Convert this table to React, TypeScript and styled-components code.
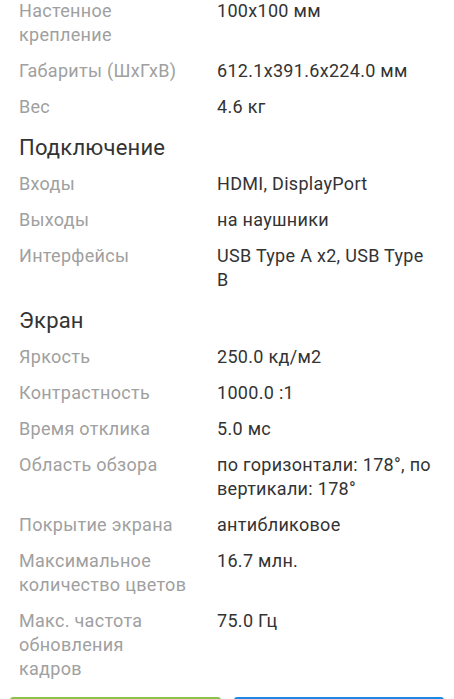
import React from "react";
import styled, { createGlobalStyle } from "styled-components";

const Global = createGlobalStyle`
  html, body { margin: 0; padding: 0; background: #ffffff; }
  body { font-family: Roboto, "Noto Sans", Arial, sans-serif; overflow: hidden; }
`;

const Page = styled.div`
  width: 454px;
  height: 699px;
  overflow: hidden;
  background: #fff;
`;

const List = styled.div`
  margin-top: -7px;
  padding: 0 19px;
  display: flex;
  flex-direction: column;
`;

const SectionTitle = styled.h2`
  margin: 0;
  padding: 8px 0 3px;
  font-size: 22px;
  line-height: 30px;
  font-weight: 400;
  letter-spacing: 0.2px;
  color: #333333;
`;

const Row = styled.div`
  display: grid;
  grid-template-columns: 198px 1fr;
  padding: 6px 0;
  font-size: 18px;
  line-height: 24px;
  letter-spacing: 0.3px;
`;

const Label = styled.div`
  color: #a0a0a0;
`;

const Value = styled.div`
  color: #333333;
`;

const ButtonBar = styled.div`
  margin-top: 10px;
  padding: 0 10px;
  display: grid;
  grid-template-columns: 1fr 1fr;
  gap: 13px;
`;

const Button = styled.button<{ $color: string }>`
  display: block;
  height: 44px;
  padding: 0;
  border: none;
  border-radius: 3px;
  background: ${(p) => p.$color};
`;

type Spec = { label: string[]; value: string[] };
type Section = { title?: string; rows: Spec[] };

const sections: Section[] = [
  {
    rows: [
      { label: ["Настенное", "крепление"], value: ["100x100 мм"] },
      { label: ["Габариты (ШхГхВ)"], value: ["612.1x391.6x224.0 мм"] },
      { label: ["Вес"], value: ["4.6 кг"] },
    ],
  },
  {
    title: "Подключение",
    rows: [
      { label: ["Входы"], value: ["HDMI, DisplayPort"] },
      { label: ["Выходы"], value: ["на наушники"] },
      { label: ["Интерфейсы"], value: ["USB Type A x2, USB Type", "B"] },
    ],
  },
  {
    title: "Экран",
    rows: [
      { label: ["Яркость"], value: ["250.0 кд/м2"] },
      { label: ["Контрастность"], value: ["1000.0 :1"] },
      { label: ["Время отклика"], value: ["5.0 мс"] },
      { label: ["Область обзора"], value: ["по горизонтали: 178°, по", "вертикали: 178°"] },
      { label: ["Покрытие экрана"], value: ["антибликовое"] },
      { label: ["Максимальное", "количество цветов"], value: ["16.7 млн."] },
      { label: ["Макс. частота", "обновления", "кадров"], value: ["75.0 Гц"] },
    ],
  },
];

const Lines = ({ lines }: { lines: string[] }) => (
  <>
    {lines.map((l, i) => (
      <React.Fragment key={i}>
        {i > 0 && <br />}
        {l}
      </React.Fragment>
    ))}
  </>
);

export default function App() {
  return (
    <Page>
      <Global />
      <List>
        {sections.map((s, si) => (
          <React.Fragment key={si}>
            {s.title && <SectionTitle>{s.title}</SectionTitle>}
            {s.rows.map((r, ri) => (
              <Row key={ri}>
                <Label>
                  <Lines lines={r.label} />
                </Label>
                <Value>
                  <Lines lines={r.value} />
                </Value>
              </Row>
            ))}
          </React.Fragment>
        ))}
      </List>
      <ButtonBar>
        <Button $color="#8bc34a" aria-label="Купить" />
        <Button $color="#1e88e5" aria-label="В корзину" />
      </ButtonBar>
    </Page>
  );
}
